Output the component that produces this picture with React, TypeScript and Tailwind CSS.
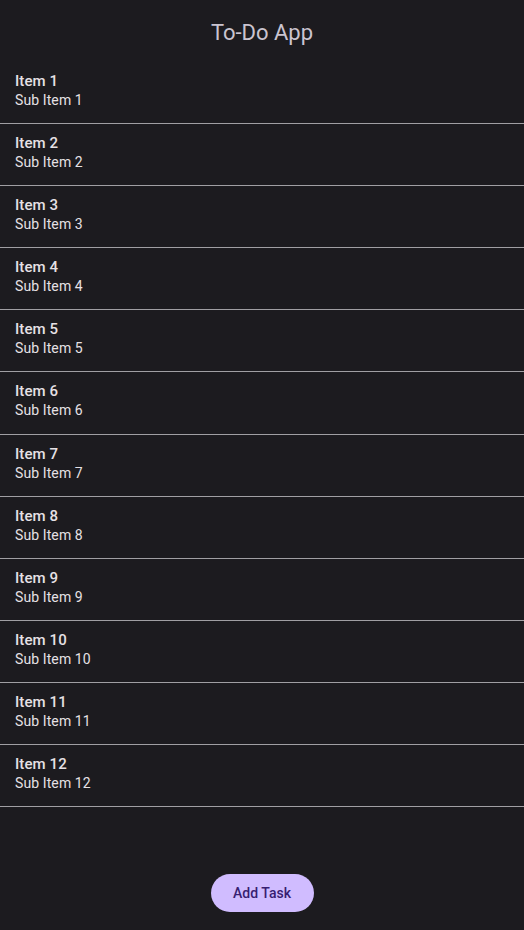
const items = Array.from({ length: 12 }, (_, i) => i + 1);

export default function App() {
  return (
    <div
      className="flex h-[930px] flex-col bg-[#1c1b1f]"
      style={{ fontFamily: "Roboto, 'Noto Sans', sans-serif" }}
    >
      <header className="flex h-[62px] items-center justify-center">
        <h1 className="pt-[3px] text-[22px] leading-7 text-[#cac4d0]">To-Do App</h1>
      </header>

      <ul className="flex flex-col">
        {items.map((n) => (
          <li
            key={n}
            className="flex h-[62.1px] flex-col border-b border-[#a09fa3] px-[15px] pt-[9px]"
          >
            <span className="text-[15px] font-medium leading-[20px] tracking-[0.1px] text-[#e6e1e5]">
              Item {n}
            </span>
            <span className="text-[14px] leading-[19px] tracking-[0.1px] text-[#e6e1e5]">
              Sub Item {n}
            </span>
          </li>
        ))}
      </ul>

      <div className="flex flex-1 items-end justify-center pb-[18px]">
        <button className="h-[38px] w-[103px] rounded-full bg-[#d0bcff] text-[14px] font-medium text-[#381e72]">
          Add Task
        </button>
      </div>
    </div>
  );
}
